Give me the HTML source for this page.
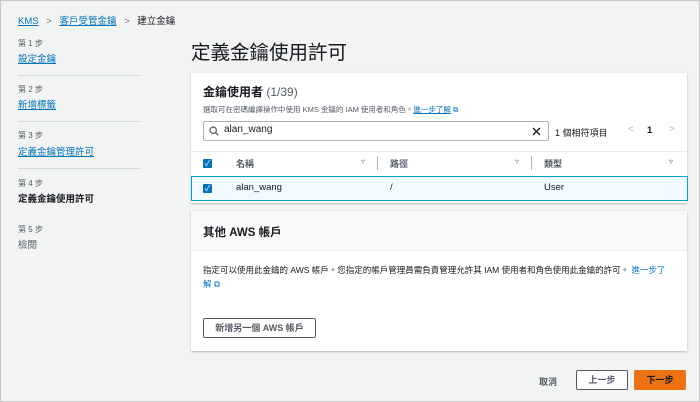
<!DOCTYPE html>
<html><head><meta charset="utf-8"><style>
*{box-sizing:border-box;margin:0;padding:0}
body{width:700px;height:402px;background:#f2f3f3;font-family:"Liberation Sans","Noto Sans CJK TC",sans-serif;color:#16191f;position:relative;overflow:hidden;border:1px solid #c8c8c8}
.a{position:absolute;white-space:nowrap}
.lk{color:#0073bb;text-decoration:underline}
.s{font-size:8px;color:#545b64}
.n{font-size:9.5px}
.hr{position:absolute;left:17px;width:123px;height:1px;background:#d5dbdb}
.panel{position:absolute;left:190px;width:496px;background:#fff;box-shadow:0 1px 2px rgba(0,0,0,.25)}
.cb{position:absolute;width:9px;height:9px;background:#0073bb;border-radius:1px;color:#fff;font-size:8px;line-height:9px;text-align:center}
.btn{position:absolute;border:1px solid #545b64;border-radius:2px;background:#fff;font-size:9px;font-weight:bold;color:#545b64;text-align:center}
</style></head><body>
<div class="a" style="left:17px;top:12px;font-size:9.5px"><span class="lk">KMS</span> <span style="color:#687078;margin:0 5px">&gt;</span> <span class="lk">客戶受管金鑰</span> <span style="color:#687078;margin:0 5px">&gt;</span> 建立金鑰</div>
<div class="a s" style="left:17px;top:37px">第 1 步</div><div class="a n lk" style="left:17px;top:50px">設定金鑰</div>
<div class="hr" style="top:74px"></div>
<div class="a s" style="left:17px;top:83px">第 2 步</div><div class="a n lk" style="left:17px;top:96px">新增標籤</div>
<div class="hr" style="top:120px"></div>
<div class="a s" style="left:17px;top:129px">第 3 步</div><div class="a n lk" style="left:17px;top:143px">定義金鑰管理許可</div>
<div class="hr" style="top:167px"></div>
<div class="a s" style="left:17px;top:177px">第 4 步</div><div class="a n" style="left:17px;top:190px;font-weight:bold">定義金鑰使用許可</div>
<div class="a s" style="left:17px;top:223px">第 5 步</div><div class="a n" style="left:17px;top:236px;color:#545b64">檢閱</div>
<div class="a" style="left:190px;top:35px;font-size:19.5px">定義金鑰使用許可</div>

<div class="panel" style="top:72px;height:130px">
<div class="a" style="left:12px;top:10px;font-size:12px;font-weight:bold">金鑰使用者 <span style="font-weight:normal;color:#545b64">(1/39)</span></div>
<div class="a" style="left:12px;top:31px;font-size:7.5px;color:#545b64">選取可在密碼編譯操作中使用 KMS 金鑰的 IAM 使用者和角色。<span class="lk">進一步了解</span> <span style="color:#0073bb">⧉</span></div>
<div class="a" style="left:12px;top:48px;width:346px;height:20px;border:1px solid #aab7b8;border-radius:2px"></div>
<svg class="a" style="left:18px;top:53px" width="10" height="10" viewBox="0 0 10 10"><circle cx="4.2" cy="4.2" r="3.2" fill="none" stroke="#545b64" stroke-width="1.2"/><line x1="6.6" y1="6.6" x2="9.3" y2="9.3" stroke="#545b64" stroke-width="1.2"/></svg>
<div class="a" style="left:33px;top:51px;font-size:10px">alan_wang</div>
<svg class="a" style="left:341px;top:54px" width="9" height="9" viewBox="0 0 9 9"><path d="M1 1L8 8M8 1L1 8" stroke="#16191f" stroke-width="1.3"/></svg>
<div class="a" style="left:364px;top:53px;font-size:9px">1 個相符項目</div>
<div class="a" style="left:437px;top:51px;font-size:10px;color:#aab7b8">&lt;</div>
<div class="a" style="left:456px;top:52px;font-size:9.5px;font-weight:bold">1</div>
<div class="a" style="left:478px;top:51px;font-size:10px;color:#aab7b8">&gt;</div>
<div class="a" style="left:0;top:78px;width:496px;height:1px;background:#eaeded"></div>
<div class="cb" style="left:12px;top:86px">✓</div>
<div class="a" style="left:45px;top:84px;font-size:9px;font-weight:bold;color:#545b64">名稱</div>
<div class="a" style="left:170px;top:84px;font-size:8px;color:#687078">▿</div>
<div class="a" style="left:186px;top:83px;width:1px;height:14px;background:#aab7b8"></div>
<div class="a" style="left:199px;top:84px;font-size:9px;font-weight:bold;color:#545b64">路徑</div>
<div class="a" style="left:324px;top:84px;font-size:8px;color:#687078">▿</div>
<div class="a" style="left:340px;top:83px;width:1px;height:14px;background:#aab7b8"></div>
<div class="a" style="left:353px;top:84px;font-size:9px;font-weight:bold;color:#545b64">類型</div>
<div class="a" style="left:478px;top:84px;font-size:8px;color:#687078">▿</div>
<div class="a" style="left:0;top:103px;width:497px;height:25px;background:#f1faff;border:1px solid #00a1c9"></div>
<div class="cb" style="left:12px;top:111px">✓</div>
<div class="a" style="left:45px;top:109px;font-size:9.5px">alan_wang</div>
<div class="a" style="left:199px;top:109px;font-size:9.5px">/</div>
<div class="a" style="left:353px;top:109px;font-size:9.5px">User</div>
</div>

<div class="panel" style="top:210px;height:140px">
<div class="a" style="left:0;top:0;width:496px;height:40px;background:#fafafa;border-bottom:1px solid #eaeded"></div>
<div class="a" style="left:12px;top:13px;font-size:11.5px;font-weight:bold">其他 AWS 帳戶</div>
<div class="a" style="left:12px;top:53px;font-size:8.5px">指定可以使用此金鑰的 AWS 帳戶。您指定的帳戶管理員需負責管理允許其 IAM 使用者和角色使用此金鑰的許可。 <span class="lk" style="text-decoration:none">進一步了</span></div>
<div class="a" style="left:12px;top:67px;font-size:8.5px;color:#0073bb">解 ⧉</div>
<div class="btn" style="left:12px;top:107px;width:113px;height:20px;line-height:18px">新增另一個 AWS 帳戶</div>
</div>

<div class="a" style="left:538px;top:374px;font-size:9px;font-weight:bold;color:#545b64">取消</div>
<div class="btn" style="left:575px;top:369px;width:52px;height:20px;line-height:18px">上一步</div>
<div class="btn" style="left:633px;top:369px;width:52px;height:20px;line-height:18px;background:#ec7211;border-color:#ec7211;color:#16191f">下一步</div>
</body></html>
